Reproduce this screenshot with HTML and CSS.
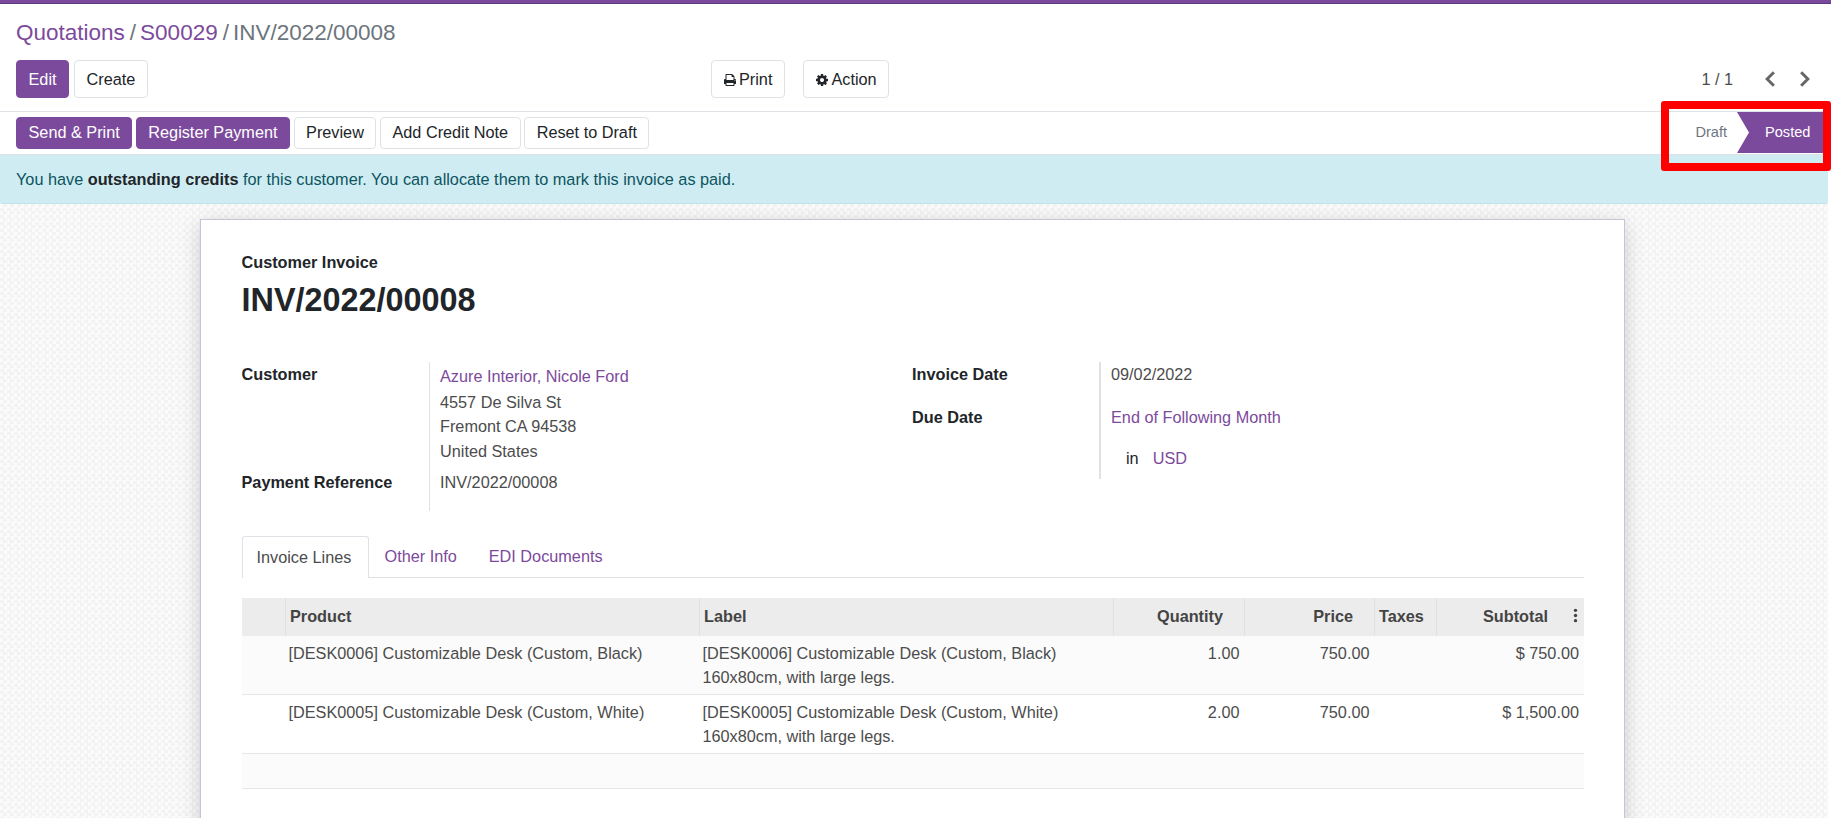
FILE: index.html
```html
<!DOCTYPE html>
<html>
<head>
<meta charset="utf-8">
<title>INV/2022/00008</title>
<link rel="stylesheet" href="styles.css">
</head>
<body>

<div class="topbar"></div>

<div class="panel">
    <div class="breadcrumb">
        <a href="#">Quotations</a><span class="sep">/</span><a href="#">S00029</a><span class="sep">/</span><span class="current">INV/2022/00008</span>
    </div>
    <div class="main-row">
        <div class="btn-group left-group">
            <button class="btn primary">Edit</button>
            <button class="btn">Create</button>
        </div>
        <div class="btn-group side-group">
            <button class="btn">
                <svg class="icon" viewBox="128 128 1536 1536"><path d="M448 1536h896v-256h-896v256zm0-640h896v-384h-160q-40 0-68-28t-28-68v-160h-640v640zm1152 64q0-26-19-45t-45-19-45 19-19 45 19 45 45 19 45-19 19-45zm128 0v416q0 13-9.5 22.5t-22.5 9.5h-224v160q0 40-28 68t-68 28h-960q-40 0-68-28t-28-68v-160h-224q-13 0-22.5-9.5t-9.5-22.5v-416q0-79 56.5-135.5t135.5-56.5h64v-544q0-40 28-68t68-28h672q40 0 88 20t76 48l152 152q28 28 48 76t20 88v256h64q79 0 135.5 56.5t56.5 135.5z"/></svg>Print
            </button>
            <button class="btn">
                <svg class="icon" viewBox="128 128 1536 1536"><path d="M1152 896q0-106-75-181t-181-75-181 75-75 181 75 181 181 75 181-75 75-181zm512-109v222q0 12-8 23t-20 13l-185 28q-19 54-39 91 35 50 107 138 10 12 10 25t-9 23q-27 37-99 108t-94 71q-12 0-26-9l-138-108q-44 23-91 38-16 136-29 186-7 28-36 28h-222q-14 0-24.5-8.5t-11.5-21.5l-28-184q-49-16-90-37l-141 107q-10 9-25 9-14 0-25-11-126-114-165-168-7-10-7-23 0-12 8-23 15-21 51-66.5t54-70.5q-27-50-41-99l-183-27q-13-2-21-12.5t-8-23.5v-222q0-12 8-23t19-13l186-28q14-46 39-92-40-57-107-138-10-12-10-24 0-10 9-23 26-36 98.5-107.5t94.5-71.5q13 0 26 10l138 107q44-23 91-38 16-136 29-186 7-28 36-28h222q14 0 24.5 8.5t11.5 21.5l28 184q49 16 90 37l142-107q9-9 24-9 13 0 25 10 129 119 165 170 7 8 7 22 0 12-8 23-15 21-51 66.5t-54 70.5q26 50 41 98l183 28q13 2 21 12.5t8 23.5z"/></svg>Action
            </button>
        </div>
        <div class="pager">
            <span class="pager-count">1 / 1</span>
            <svg class="chevron" viewBox="0 0 12 16"><path d="M9 2 3 8l6 6"/></svg>
            <svg class="chevron" viewBox="0 0 12 16"><path d="M3 2l6 6-6 6"/></svg>
        </div>
    </div>
</div>

<div class="statusbar">
    <div class="status-buttons">
        <button class="btn small primary">Send &amp; Print</button>
        <button class="btn small primary">Register Payment</button>
        <button class="btn small">Preview</button>
        <button class="btn small">Add Credit Note</button>
        <button class="btn small">Reset to Draft</button>
    </div>
    <div class="status-steps">
        <span class="step">Draft</span>
        <span class="step active">Posted</span>
    </div>
</div>

<div class="highlight"></div>

<div class="content">
    <div class="alert">You have <b>outstanding credits</b> for this customer. You can allocate them to mark this invoice as paid.</div>

    <div class="sheet">
        <div class="doc-type">Customer Invoice</div>
        <h1>INV/2022/00008</h1>

        <div class="fields">
            <div class="field-group left-fields">
                <div class="field-label">Customer</div>
                <div class="field-value address">
                    <a class="partner" href="#">Azure Interior, Nicole Ford</a>
                    <div>4557 De Silva St</div>
                    <div>Fremont CA 94538</div>
                    <div>United States</div>
                </div>
                <div class="field-label">Payment Reference</div>
                <div class="field-value ref-value">INV/2022/00008</div>
            </div>
            <div class="field-group right-fields">
                <div class="field-label">Invoice Date</div>
                <div class="field-value date-value">09/02/2022</div>
                <div class="field-label due-label">Due Date</div>
                <div class="field-value due-value">
                    <a href="#">End of Following Month</a>
                    <div class="currency"><span>in</span><a href="#">USD</a></div>
                </div>
            </div>
        </div>

        <div class="tabs">
            <a class="tab active">Invoice Lines</a>
            <a class="tab" href="#">Other Info</a>
            <a class="tab" href="#">EDI Documents</a>
        </div>

        <table class="lines">
            <colgroup>
                <col class="c-handle"><col class="c-text"><col class="c-text"><col class="c-qty"><col class="c-price"><col class="c-tax"><col>
            </colgroup>
            <thead>
                <tr>
                    <th></th>
                    <th>Product</th>
                    <th>Label</th>
                    <th class="num">Quantity</th>
                    <th class="num">Price</th>
                    <th>Taxes</th>
                    <th class="num subtotal">Subtotal
                        <svg class="kebab" viewBox="0 0 4 16"><circle cx="2" cy="2.5" r="1.8"/><circle cx="2" cy="8" r="1.8"/><circle cx="2" cy="13.5" r="1.8"/></svg>
                    </th>
                </tr>
            </thead>
            <tbody>
                <tr class="odd">
                    <td></td>
                    <td>[DESK0006] Customizable Desk (Custom, Black)</td>
                    <td>[DESK0006] Customizable Desk (Custom, Black)<br>160x80cm, with large legs.</td>
                    <td class="num">1.00</td>
                    <td class="num">750.00</td>
                    <td></td>
                    <td class="num">$ 750.00</td>
                </tr>
                <tr>
                    <td></td>
                    <td>[DESK0005] Customizable Desk (Custom, White)</td>
                    <td>[DESK0005] Customizable Desk (Custom, White)<br>160x80cm, with large legs.</td>
                    <td class="num">2.00</td>
                    <td class="num">750.00</td>
                    <td></td>
                    <td class="num">$ 1,500.00</td>
                </tr>
                <tr class="odd blank">
                    <td colspan="7"></td>
                </tr>
            </tbody>
        </table>
    </div>
</div>

</body>
</html>
```

FILE: styles.css
```css
* {
    box-sizing: border-box;
}

html, body {
    margin: 0;
    height: 818px;
    overflow: hidden;
}

body {
    position: relative;
    background: #fff;
    color: #4c4c4c;
    font-family: "Liberation Sans", Arial, sans-serif;
    font-size: 16.25px;
}

a {
    color: #7c4a9c;
    text-decoration: none;
}

.topbar {
    height: 4px;
    background: #7c4a9c;
    border-bottom: 1px solid #5c3a7c;
}

/* control panel */
.panel {
    height: 108px;
    padding: 0 16px;
    border-bottom: 1px solid #dee2e6;
}

.breadcrumb {
    height: 56px;
    padding-top: 15px;
    font-size: 22.5px;
    line-height: 28px;
}

.breadcrumb .sep {
    margin: 0 4px 0 5px;
    color: #6c757d;
}

.breadcrumb .current {
    color: #6c757d;
}

.main-row {
    display: flex;
    align-items: center;
}

.btn-group {
    display: flex;
}

.left-group {
    width: 695px;
    gap: 5px;
}

.side-group {
    gap: 18.5px;
}

.btn {
    height: 38px;
    padding: 0 11.5px;
    font: inherit;
    color: #212529;
    background: #fff;
    border: 1px solid #dee2e6;
    border-radius: 4px;
    white-space: nowrap;
}

.btn.primary {
    color: #fff;
    background: #7c4a9c;
    border-color: #7c4a9c;
}

.btn.small {
    height: 32px;
    padding-bottom: 1px;
}

.icon {
    width: 12px;
    height: 12px;
    margin-right: 3.5px;
    vertical-align: -1px;
    fill: #212529;
}

.pager {
    display: flex;
    align-items: center;
    margin-left: auto;
    margin-right: 3px;
}

.pager-count {
    margin-right: 30px;
}

.chevron {
    width: 15px;
    height: 18px;
    fill: none;
    stroke: #666;
    stroke-width: 2.6;
}

.chevron + .chevron {
    margin-left: 19px;
}

/* status bar */
.statusbar {
    display: flex;
    justify-content: space-between;
    height: 43px;
    padding: 5px 8px 0 16px;
    border-bottom: 1px solid #dee2e6;
}

.status-buttons {
    display: flex;
    gap: 3.6px;
}

.status-steps {
    display: flex;
    margin-top: -5px;
    height: 41px;
    font-size: 14.6px;
    line-height: 41px;
}

.step {
    padding-right: 10px;
    color: #6c757d;
}

.step.active {
    width: 86px;
    padding-left: 28px;
    color: #fff;
    background: #7c4a9c;
    clip-path: polygon(0 0, 100% 0, 100% 100%, 0 100%, 12px 50%);
}

.highlight {
    position: absolute;
    top: 101px;
    left: 1661px;
    width: 170px;
    height: 70px;
    border: 8px solid #f00;
    border-radius: 3px;
    z-index: 5;
}

/* form */
.content {
    width: 1828px;
    height: 663px;
    overflow: hidden;
    background: repeating-conic-gradient(#f3f3f3 0 25%, #fbfbfb 0 50%) 0 0 / 7px 7px;
}

.alert {
    height: 49px;
    padding: 0 16px;
    line-height: 48px;
    color: #0c5460;
    background: #cfecf2;
    border-bottom: 1px solid #bee5eb;
    border-radius: 0 0 3px 3px;
}

.alert b {
    color: #212529;
}

.sheet {
    width: 1425px;
    height: 640px;
    margin: 15px 0 0 200px;
    padding: 0 40px 0 40.5px;
    background: #fff;
    border: 1px solid #c8c4d6;
    box-shadow: 0 5px 20px -1px rgba(0, 0, 0, .2);
}

.doc-type {
    margin-top: 32px;
    font-weight: bold;
    color: #212529;
    line-height: 20px;
}

h1 {
    margin: 8px 0 0;
    font-size: 32.4px;
    line-height: 40px;
    color: #212529;
}

.fields {
    display: flex;
    margin-top: 42px;
}

.field-group {
    display: grid;
    align-content: start;
}

.left-fields {
    width: 670.5px;
    grid-template-columns: 187px auto;
}

.right-fields {
    grid-template-columns: 187px auto;
}

.field-label {
    font-weight: bold;
    color: #212529;
    line-height: 24px;
}

.field-value {
    padding-left: 10.5px;
    border-left: 1px solid #dee2e6;
    line-height: 24.5px;
}

.right-fields .field-value {
    padding-left: 10px;
    border-left-width: 2px;
}

.address {
    padding-top: 2px;
    height: 108px;
}

.partner {
    display: block;
    margin-bottom: 1px;
}

.ref-value {
    height: 41px;
}

.date-value {
    height: 42px;
}

.due-value {
    height: 75px;
    padding-top: 1px;
}

.due-label {
    padding-top: 1px;
}

.currency {
    margin: 16px 0 0 15px;
}

.currency span {
    margin-right: 14px;
    color: #212529;
}

/* tabs */
.tabs {
    display: flex;
    height: 42px;
    margin-top: 25px;
    border-bottom: 1px solid #dee2e6;
}

.tab {
    padding: 0 16px;
    line-height: 41px;
}

.tab.active {
    height: 42px;
    width: 127px;
    padding: 0 14px;
    color: #4c4c4c;
    background: #fff;
    border: 1px solid #dee2e6;
    border-bottom: 0;
    border-radius: 3px 3px 0 0;
}

/* lines table */
.lines {
    width: 100%;
    margin-top: 20px;
    border-collapse: collapse;
    table-layout: fixed;
}

.c-handle {
    width: 44px;
}

.c-text {
    width: 414px;
}

.c-qty {
    width: 131px;
}

.c-price {
    width: 130px;
}

.c-tax {
    width: 62px;
}

th {
    position: relative;
    height: 38px;
    padding: 0 4px 1px;
    text-align: left;
    color: #444;
    background: #ececec;
    border-left: 1px solid #dee2e6;
}

th:first-child {
    border-left: 0;
}

th.num {
    padding-right: 21px;
    text-align: right;
}

th.subtotal {
    padding-right: 36px;
}

.kebab {
    position: absolute;
    top: 10px;
    right: 6px;
    width: 5px;
    height: 15px;
    fill: #444;
}

td {
    height: 58.5px;
    padding: 5px 4px 0 3px;
    vertical-align: top;
    line-height: 24px;
    border-bottom: 1px solid #e6e6e6;
}

td.num {
    padding-right: 5px;
    text-align: right;
}

.odd td {
    background: #fbfbfb;
}

.blank td {
    height: 35px;
}
```
